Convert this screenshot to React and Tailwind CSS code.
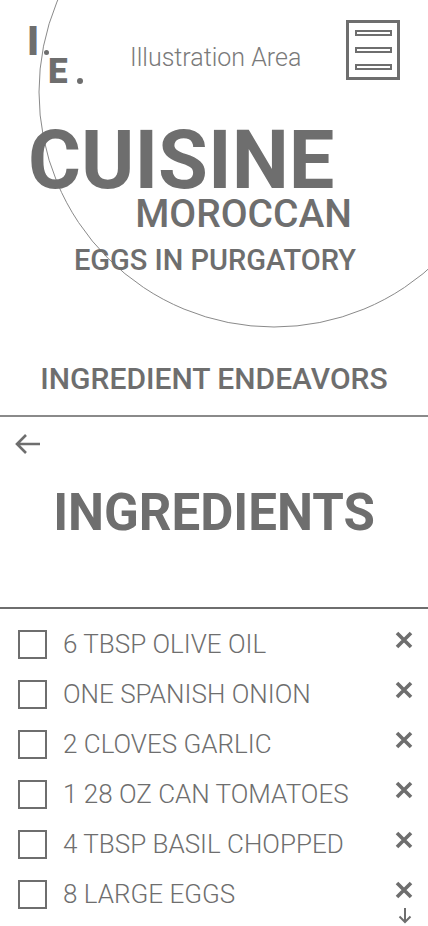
import React from "react";

const ingredients = [
  "6 TBSP OLIVE OIL",
  "ONE SPANISH ONION",
  "2 CLOVES GARLIC",
  "1 28 OZ CAN TOMATOES",
  "4 TBSP BASIL CHOPPED",
  "8 LARGE EGGS",
];

function CloseIcon() {
  return (
    <svg width="18" height="18" viewBox="0 0 18 18" className="shrink-0">
      <path d="M2 2 L16 16 M16 2 L2 16" stroke="#6e6e6e" strokeWidth="3.6" />
    </svg>
  );
}

function App() {
  return (
    <div className="relative w-[428px] h-[926px] overflow-hidden bg-white font-['Roboto',sans-serif] text-[#6e6e6e]">
      {/* decorative circle */}
      <svg
        className="absolute left-0 top-0 pointer-events-none"
        width="428"
        height="340"
        viewBox="0 0 428 340"
      >
        <circle cx="274" cy="92" r="235" fill="none" stroke="#8a8a8a" strokeWidth="1" />
      </svg>

      {/* header */}
      <header className="relative flex items-start h-[80px]">
        <div className="relative w-[60px] h-[66px] ml-[27px] mt-[22px] font-black">
          <span className="absolute left-0 top-0 text-[40px] leading-none">I</span>
          <span className="absolute left-[17px] top-[28px] w-[5px] h-[5px] rounded-full bg-[#6e6e6e]" />
          <span className="absolute left-[21px] top-[32px] text-[35px] leading-none">E</span>
          <span className="absolute left-[50px] top-[56px] w-[6px] h-[6px] rounded-full bg-[#6e6e6e]" />
        </div>
        <div className="ml-[43px] mt-[43px] text-[25px] leading-[30px] font-light text-[#7a7a7a]">
          Illustration Area
        </div>
        <div className="ml-auto mr-[28px] mt-[20px] w-[54px] h-[60px] border-[3px] border-[#6e6e6e] flex flex-col items-center justify-center gap-[11px]">
          <div className="w-[37px] h-[6px] border-2 border-[#6e6e6e]" />
          <div className="w-[37px] h-[6px] border-2 border-[#6e6e6e]" />
          <div className="w-[37px] h-[6px] border-2 border-[#6e6e6e]" />
        </div>
      </header>

      {/* titles */}
      <div className="relative flex flex-col">
        <h1 className="mt-[48px] pl-[28px] text-[81px] leading-[66px] font-bold">
          CUISINE
        </h1>
        <h2 className="mt-[4px] pr-[76px] text-right text-[39px] leading-[32px] font-medium">
          MOROCCAN
        </h2>
        <h3 className="mt-[10px] pl-[2px] text-center text-[29px] leading-[40px] font-medium">
          EGGS IN PURGATORY
        </h3>
        <p className="mt-[81px] text-center text-[30px] leading-[36px] font-medium">
          INGREDIENT ENDEAVORS
        </p>
      </div>

      <div className="mt-[18px] border-t-2 border-[#8a8a8a]" />

      <div className="pl-[14px] pt-[16px] h-[40px]">
        <svg width="28" height="22" viewBox="0 0 28 22">
          <path d="M26 11 H3 M12 2 L3 11 L12 20" fill="none" stroke="#6e6e6e" strokeWidth="2.6" />
        </svg>
      </div>

      <h2 className="mt-[28px] text-center text-[51px] leading-[56px] font-bold">
        INGREDIENTS
      </h2>

      <div className="mt-[66px] border-t-2 border-[#6e6e6e]" />

      <ul className="pt-[10px] flex flex-col">
        {ingredients.map((item) => (
          <li key={item} className="flex items-center h-[50px] pl-[18px] pr-[15px]">
            <div className="w-[29px] h-[29px] border-2 border-[#6e6e6e] shrink-0" />
            <span className="ml-[16px] text-[26px] font-light leading-none">{item}</span>
            <div className="ml-auto -mt-[8px]">
              <CloseIcon />
            </div>
          </li>
        ))}
      </ul>

      <div className="flex justify-end pr-[16px] -mt-[12px]">
        <svg width="14" height="17" viewBox="0 0 14 17">
          <path d="M7 1 V15 M1.5 9.5 L7 15 L12.5 9.5" fill="none" stroke="#6e6e6e" strokeWidth="2" />
        </svg>
      </div>
    </div>
  );
}

export default App;
